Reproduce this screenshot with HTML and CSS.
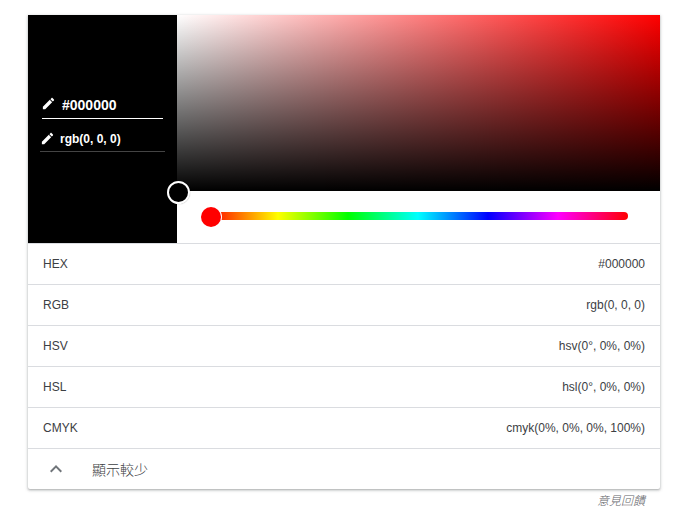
FILE: index.html
```html
<!DOCTYPE html>
<html lang="zh-Hant">
<head>
<meta charset="utf-8">
<title>Color picker</title>
<link rel="stylesheet" href="styles.css">
</head>
<body>
<main class="card">
  <section class="picker">
    <div class="panel">
      <div class="field field-hex">
        <svg class="pen" viewBox="0 0 24 24"><path d="M3 17.25V21h3.75L17.81 9.94l-3.75-3.75L3 17.25zM20.71 7.04c.39-.39.39-1.02 0-1.41l-2.34-2.34c-.39-.39-1.02-.39-1.41 0l-1.83 1.83 3.75 3.75 1.83-1.83z"/></svg>
        <span>#000000</span>
      </div>
      <div class="field field-rgb">
        <svg class="pen" viewBox="0 0 24 24"><path d="M3 17.25V21h3.75L17.81 9.94l-3.75-3.75L3 17.25zM20.71 7.04c.39-.39.39-1.02 0-1.41l-2.34-2.34c-.39-.39-1.02-.39-1.41 0l-1.83 1.83 3.75 3.75 1.83-1.83z"/></svg>
        <span>rgb(0, 0, 0)</span>
      </div>
    </div>
    <div class="controls">
      <div class="canvas"></div>
      <div class="slider-area">
        <div class="track"><span class="hue-thumb"></span></div>
      </div>
    </div>
    <span class="canvas-thumb"></span>
  </section>
  <div class="row"><span>HEX</span><span>#000000</span></div>
  <div class="row"><span>RGB</span><span>rgb(0, 0, 0)</span></div>
  <div class="row"><span>HSV</span><span>hsv(0°, 0%, 0%)</span></div>
  <div class="row"><span>HSL</span><span>hsl(0°, 0%, 0%)</span></div>
  <div class="row"><span>CMYK</span><span>cmyk(0%, 0%, 0%, 100%)</span></div>
  <div class="toggle">
    <svg class="chevron" viewBox="0 0 24 24"><path d="M12 8l-6 6 1.41 1.41L12 10.83l4.59 4.58L18 14z"/></svg>
    <span>顯示較少</span>
  </div>
</main>
<footer class="feedback">意見回饋</footer>
</body>
</html>
```
FILE: styles.css
```css
html, body {
  margin: 0;
  background: #fff;
}
body {
  padding: 15px 30px 0 28px;
  font-family: "Liberation Sans", "Noto Sans CJK TC", sans-serif;
  color: #3c4043;
}
.card {
  border-radius: 0 0 2px 2px;
  box-shadow: 0 1px 2px rgba(60, 64, 67, .3), 0 1px 3px 1px rgba(60, 64, 67, .15);
  background: #fff;
}
.picker {
  position: relative;
  display: flex;
  height: 228px;
}
.panel {
  width: 149px;
  flex: none;
  background: #000;
  color: #fff;
  font-weight: 700;
  padding-top: 79px;
  box-sizing: border-box;
}
.field {
  display: flex;
  align-items: center;
}
.field-hex {
  margin: 0 14px;
  height: 22px;
  padding-bottom: 2px;
  gap: 6px;
  border-bottom: 1px solid #fff;
  font-size: 14px;
}
.field-hex .pen {
  margin: -3px 0 0 -1px;
}
.field-rgb {
  margin: 9px 12px 0;
  height: 21px;
  padding-bottom: 2px;
  gap: 5px;
  border-bottom: 1px solid #444;
  font-size: 12px;
}
.pen {
  width: 15px;
  height: 15px;
  flex: none;
  fill: #fff;
}
.controls {
  flex: 1;
  display: flex;
  flex-direction: column;
}
.canvas {
  height: 176px;
  background:
    linear-gradient(to bottom, rgba(0, 0, 0, 0), #000),
    linear-gradient(to right, #fff, #f00);
}
.slider-area {
  flex: 1;
  padding: 21px 32px 0 31px;
}
.track {
  position: relative;
  height: 8px;
  border-radius: 4px;
  background: linear-gradient(to right, #f00, #ff0, #0f0, #0ff, #00f, #f0f, #f00);
}
.hue-thumb {
  position: absolute;
  left: -7px;
  top: -5px;
  width: 20px;
  height: 20px;
  border-radius: 50%;
  background: #f00;
  box-shadow: 0 0 0 1px #fff;
}
.canvas-thumb {
  position: absolute;
  left: 139px;
  top: 166px;
  width: 19px;
  height: 19px;
  border: 2px solid #fff;
  border-radius: 50%;
  background: #000;
  box-shadow: 0 0 1px rgba(0, 0, 0, .4);
}
.row {
  display: flex;
  justify-content: space-between;
  align-items: center;
  height: 40px;
  padding: 0 15px;
  border-top: 1px solid #dadce0;
  font-size: 12px;
  color: #3c4043;
}
.toggle {
  display: flex;
  align-items: center;
  height: 40px;
  padding-left: 16px;
  gap: 24px;
  border-top: 1px solid #dadce0;
  font-size: 14px;
  font-weight: 300;
}
.chevron {
  width: 24px;
  height: 24px;
  fill: #70757a;
}
.feedback {
  text-align: right;
  padding: 2px 15px 0 0;
  font-size: 12px;
  font-style: italic;
  font-weight: 300;
  color: #5f6368;
}
```
